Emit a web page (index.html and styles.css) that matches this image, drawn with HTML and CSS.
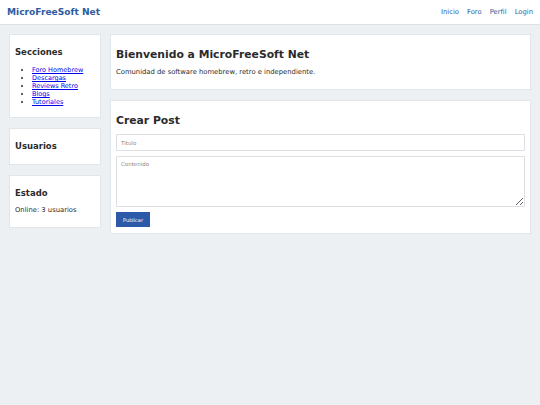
FILE: index.html
```html
<!DOCTYPE html>
<html lang="es">
<head>
  <meta charset="UTF-8">
  <meta name="viewport" content="width=device-width, initial-scale=1.0">
  <title>MicroFreeSoft Net</title>
  <link rel="stylesheet" href="styles.css">
</head>
<body>
  <!-- Cabecera -->
  <header class="topbar">
    <div class="logo">MicroFreeSoft Net</div>
    <nav class="nav">
      <a href="#">Inicio</a>
      <a href="#">Foro</a>
      <a href="#">Perfil</a>
      <a href="#">Login</a>
    </nav>
  </header>

  <div class="layout">
    <!-- Barra lateral -->
    <aside class="sidebar">
      <div class="card">
        <h3>Secciones</h3>
        <ul class="sections">
          <li><a href="#">Foro Homebrew</a></li>
          <li><a href="#">Descargas</a></li>
          <li><a href="#">Reviews Retro</a></li>
          <li><a href="#">Blogs</a></li>
          <li><a href="#">Tutoriales</a></li>
        </ul>
      </div>
      <div class="card">
        <h3>Usuarios</h3>
      </div>
      <div class="card">
        <h3>Estado</h3>
        <p>Online: 3 usuarios</p>
      </div>
    </aside>

    <!-- Contenido -->
    <main class="content">
      <div class="card">
        <h2>Bienvenido a MicroFreeSoft Net</h2>
        <p>Comunidad de software homebrew, retro e independiente.</p>
      </div>
      <div class="card">
        <h2>Crear Post</h2>
        <form class="post-form">
          <input type="text" placeholder="Titulo">
          <textarea placeholder="Contenido"></textarea>
          <button type="button">Publicar</button>
        </form>
      </div>
    </main>
  </div>
</body>
</html>
```

FILE: styles.css
```css
/* ---------- GLOBAL ---------- */
* { box-sizing: border-box; }
html, body { margin: 0; padding: 0; }
body {
  font-family: "DejaVu Sans", Verdana, sans-serif;
  background: #edf0f3;
  color: #2b2b2b;
  font-size: 7px;
}

/* ---------- CABECERA ---------- */
.topbar {
  height: 25px;
  background: #fff;
  border-bottom: 1px solid #dde1e5;
  display: flex; align-items: center; justify-content: space-between;
  padding: 0 7px;
}
.logo { font-size: 9.1px; font-weight: bold; color: #2d5b9f; }
.nav { display: flex; gap: 8px; }
.nav a { font-size: 6.8px; color: #2d5b9f; text-decoration: none; }

/* ---------- LAYOUT ---------- */
.layout {
  display: grid;
  grid-template-columns: 92px 1fr;
  gap: 9px;
  padding: 9px;
}
.sidebar, .content { display: flex; flex-direction: column; gap: 10px; }

.card {
  background: #fff;
  border: 1px solid #e2e5e9;
  padding: 6px 5px;
}
.card h3 { font-size: 8.5px; line-height: 11px; margin: 6px 0; color: #2b2b2b; }
.card h2 { font-size: 10.8px; line-height: 13px; margin: 7px 0; color: #2b2b2b; }
.card p { margin: 7px 0 6px; font-size: 6.8px; line-height: 9px; }

/* Secciones */
.sections { margin: 8px 0 5px; padding-left: 17px; font-size: 6.5px; line-height: 8px; }
.sections a { color: #00e; }

/* Formulario */
.post-form { display: flex; flex-direction: column; align-items: flex-start; gap: 5px; margin-top: 7px; }
.post-form input, .post-form textarea {
  width: 100%;
  font-family: inherit; font-size: 5.5px;
  border: 1px solid #dcdfe3; border-radius: 1px;
  padding: 4px;
  color: #333;
}
.post-form input::placeholder, .post-form textarea::placeholder { color: #8a8a8a; }
.post-form input { height: 17px; }
.post-form textarea { height: 51px; resize: vertical; }
.post-form button {
  background: #2c5aa8; color: #fff; border: none;
  font-family: inherit; font-size: 5px;
  width: 34px; height: 15px; padding: 0;
}
```
